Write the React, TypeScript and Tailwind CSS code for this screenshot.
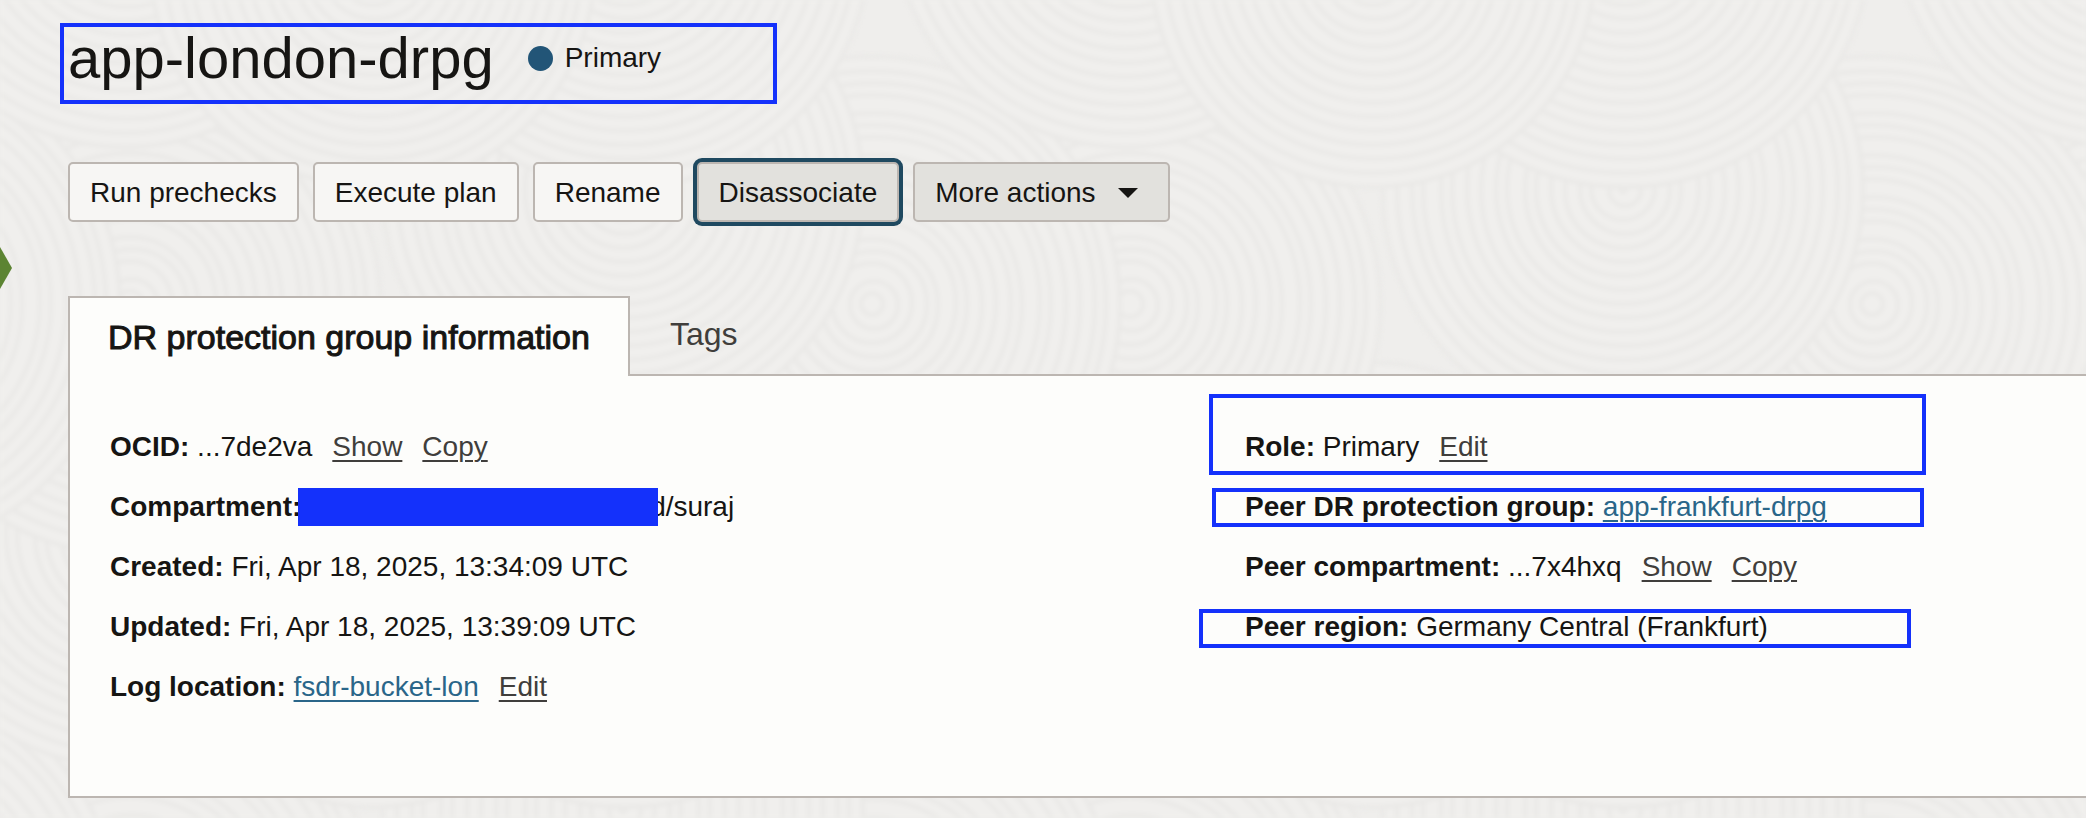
import React from "react";

type Disc = { x: number; y: number; r: number };

const TILE_WIDTH = 1000;
const TILE_HEIGHT = 620;
const RING_GAP = 14;

// Listed from the bottom of the stack to the top.
const discs: Disc[] = [
  { x: 1130, y: 305, r: 250 },
  { x: 872, y: 305, r: 248 },
  { x: 623, y: 190, r: 240 },
  { x: 625, y: -58, r: 245 },
  { x: 1125, y: -85, r: 232 },
  { x: 373, y: -35, r: 222 },
];

function Texture() {
  return (
    <svg aria-hidden="true" className="pointer-events-none absolute inset-0 -z-10 h-full w-full blur-[2px]">
      {[1, 0].map((row) =>
        [-1, 0, 1, 2].map((column) => (
          <g
            key={`${row}:${column}`}
            transform={`translate(${column * TILE_WIDTH} ${row * TILE_HEIGHT})`}
            fill="none"
            stroke="#eae9e7"
            strokeWidth="4"
          >
            {discs.map((d) => (
              <g key={`${d.x}:${d.y}`}>
                <circle cx={d.x} cy={d.y} r={d.r} fill="#f0efed" />
                {Array.from({ length: Math.floor(d.r / RING_GAP) }, (_, k) => (
                  <circle
                    key={k}
                    cx={d.x + (k % 2) * 2}
                    cy={d.y - (k % 3)}
                    r={d.r - RING_GAP * (k + 1) + (k % 3)}
                  />
                ))}
              </g>
            ))}
          </g>
        )),
      )}
    </svg>
  );
}

const buttonBase =
  "h-[60px] rounded-[5px] border-2 border-[#bcb6b1] px-5 pt-0.5 text-[28px] leading-8 text-[#161513]";

function Row({ label, children }: { label: string; children: React.ReactNode }) {
  return (
    <div className="relative h-[60px] whitespace-nowrap leading-[60px]">
      <dt className="inline font-bold">{label}:</dt> <dd className="inline">{children}</dd>
    </div>
  );
}

function Action({ children }: { children: string }) {
  return (
    <a href="#" className="ml-5 text-[#403e3c] underline decoration-2 underline-offset-4">
      {children}
    </a>
  );
}

function ResourceLink({ children }: { children: string }) {
  return (
    <a href="#" className="text-[#2a6689] underline decoration-2 underline-offset-4">
      {children}
    </a>
  );
}

export default function App() {
  return (
    <main className="relative isolate min-h-screen overflow-hidden bg-[#efeeec] pb-5 pl-[68px] font-['Liberation_Sans',Arial,sans-serif] text-[28px] text-[#161513]">
      <Texture />
      <svg aria-hidden="true" viewBox="0 0 12 42" className="absolute left-0 top-[247px] h-[42px] w-3">
        <path d="M0 0L12 21L0 42Z" fill="#5c8432" />
      </svg>

      <header className="relative flex h-[104px] items-center pt-3">
        <h1 className="text-[58px] leading-[64px]">app-london-drpg</h1>
        <span className="ml-[34px] size-[25px] rounded-full bg-[#225577]" />
        <span className="ml-3 leading-8">Primary</span>
        <div className="pointer-events-none absolute -left-2 top-[23px] h-[81px] w-[717px] border-4 border-[#1431fb]" />
      </header>

      <div className="mt-[58px] flex gap-[14px]">
        <button className={`${buttonBase} bg-[#f7f6f4]`}>Run prechecks</button>
        <button className={`${buttonBase} bg-[#f7f6f4]`}>Execute plan</button>
        <button className={`${buttonBase} bg-[#f7f6f4]`}>Rename</button>
        <button className={`${buttonBase} bg-[#e2e1dd] ring-4 ring-[#1f4960]`}>Disassociate</button>
        <button className={`${buttonBase} flex items-center gap-[22px] bg-[#e2e1dd] pr-[30px]`}>
          More actions
          <svg aria-hidden="true" viewBox="0 0 20 10" className="h-[10px] w-5">
            <path d="M0 0H20L10 10Z" fill="#161513" />
          </svg>
        </button>
      </div>

      <div role="tablist" className="mt-[74px] flex h-20 text-[32px]">
        <button
          role="tab"
          aria-selected="true"
          className="relative z-10 border-2 border-b-0 border-[#bcb6b1] bg-[#fdfdfb] px-[38px] text-[34px] [-webkit-text-stroke:1px_#161513]"
        >
          DR protection group information
        </button>
        <button role="tab" aria-selected="false" className="px-10 pb-1 text-[#403e3c]">
          Tags
        </button>
      </div>

      <section className="-mt-0.5 grid min-h-[424px] grid-cols-[1135px_1fr] border-2 border-r-0 border-[#bcb6b1] bg-[#fdfdfb] pl-10 pt-[41px]">
        <dl>
          <Row label="OCID">
            ...7de2va<Action>Show</Action>
            <Action>Copy</Action>
          </Row>
          <Row label="Compartment">
            <span className="ml-[341px]">d/suraj</span>
            <span className="absolute left-[188px] top-[11px] h-[38px] w-[360px] bg-[#1431fb]" />
          </Row>
          <Row label="Created">Fri, Apr 18, 2025, 13:34:09 UTC</Row>
          <Row label="Updated">Fri, Apr 18, 2025, 13:39:09 UTC</Row>
          <Row label="Log location">
            <ResourceLink>fsdr-bucket-lon</ResourceLink>
            <Action>Edit</Action>
          </Row>
        </dl>
        <dl>
          <Row label="Role">
            Primary<Action>Edit</Action>
            <span className="pointer-events-none absolute -left-9 -top-[23px] h-[81px] w-[717px] border-4 border-[#1431fb]" />
          </Row>
          <Row label="Peer DR protection group">
            <ResourceLink>app-frankfurt-drpg</ResourceLink>
            <span className="pointer-events-none absolute -left-[33px] top-[11px] h-[39px] w-[712px] border-4 border-[#1431fb]" />
          </Row>
          <Row label="Peer compartment">
            ...7x4hxq<Action>Show</Action>
            <Action>Copy</Action>
          </Row>
          <Row label="Peer region">
            Germany Central (Frankfurt)
            <span className="pointer-events-none absolute -left-[46px] top-3 h-[39px] w-[712px] border-4 border-[#1431fb]" />
          </Row>
        </dl>
      </section>
    </main>
  );
}
